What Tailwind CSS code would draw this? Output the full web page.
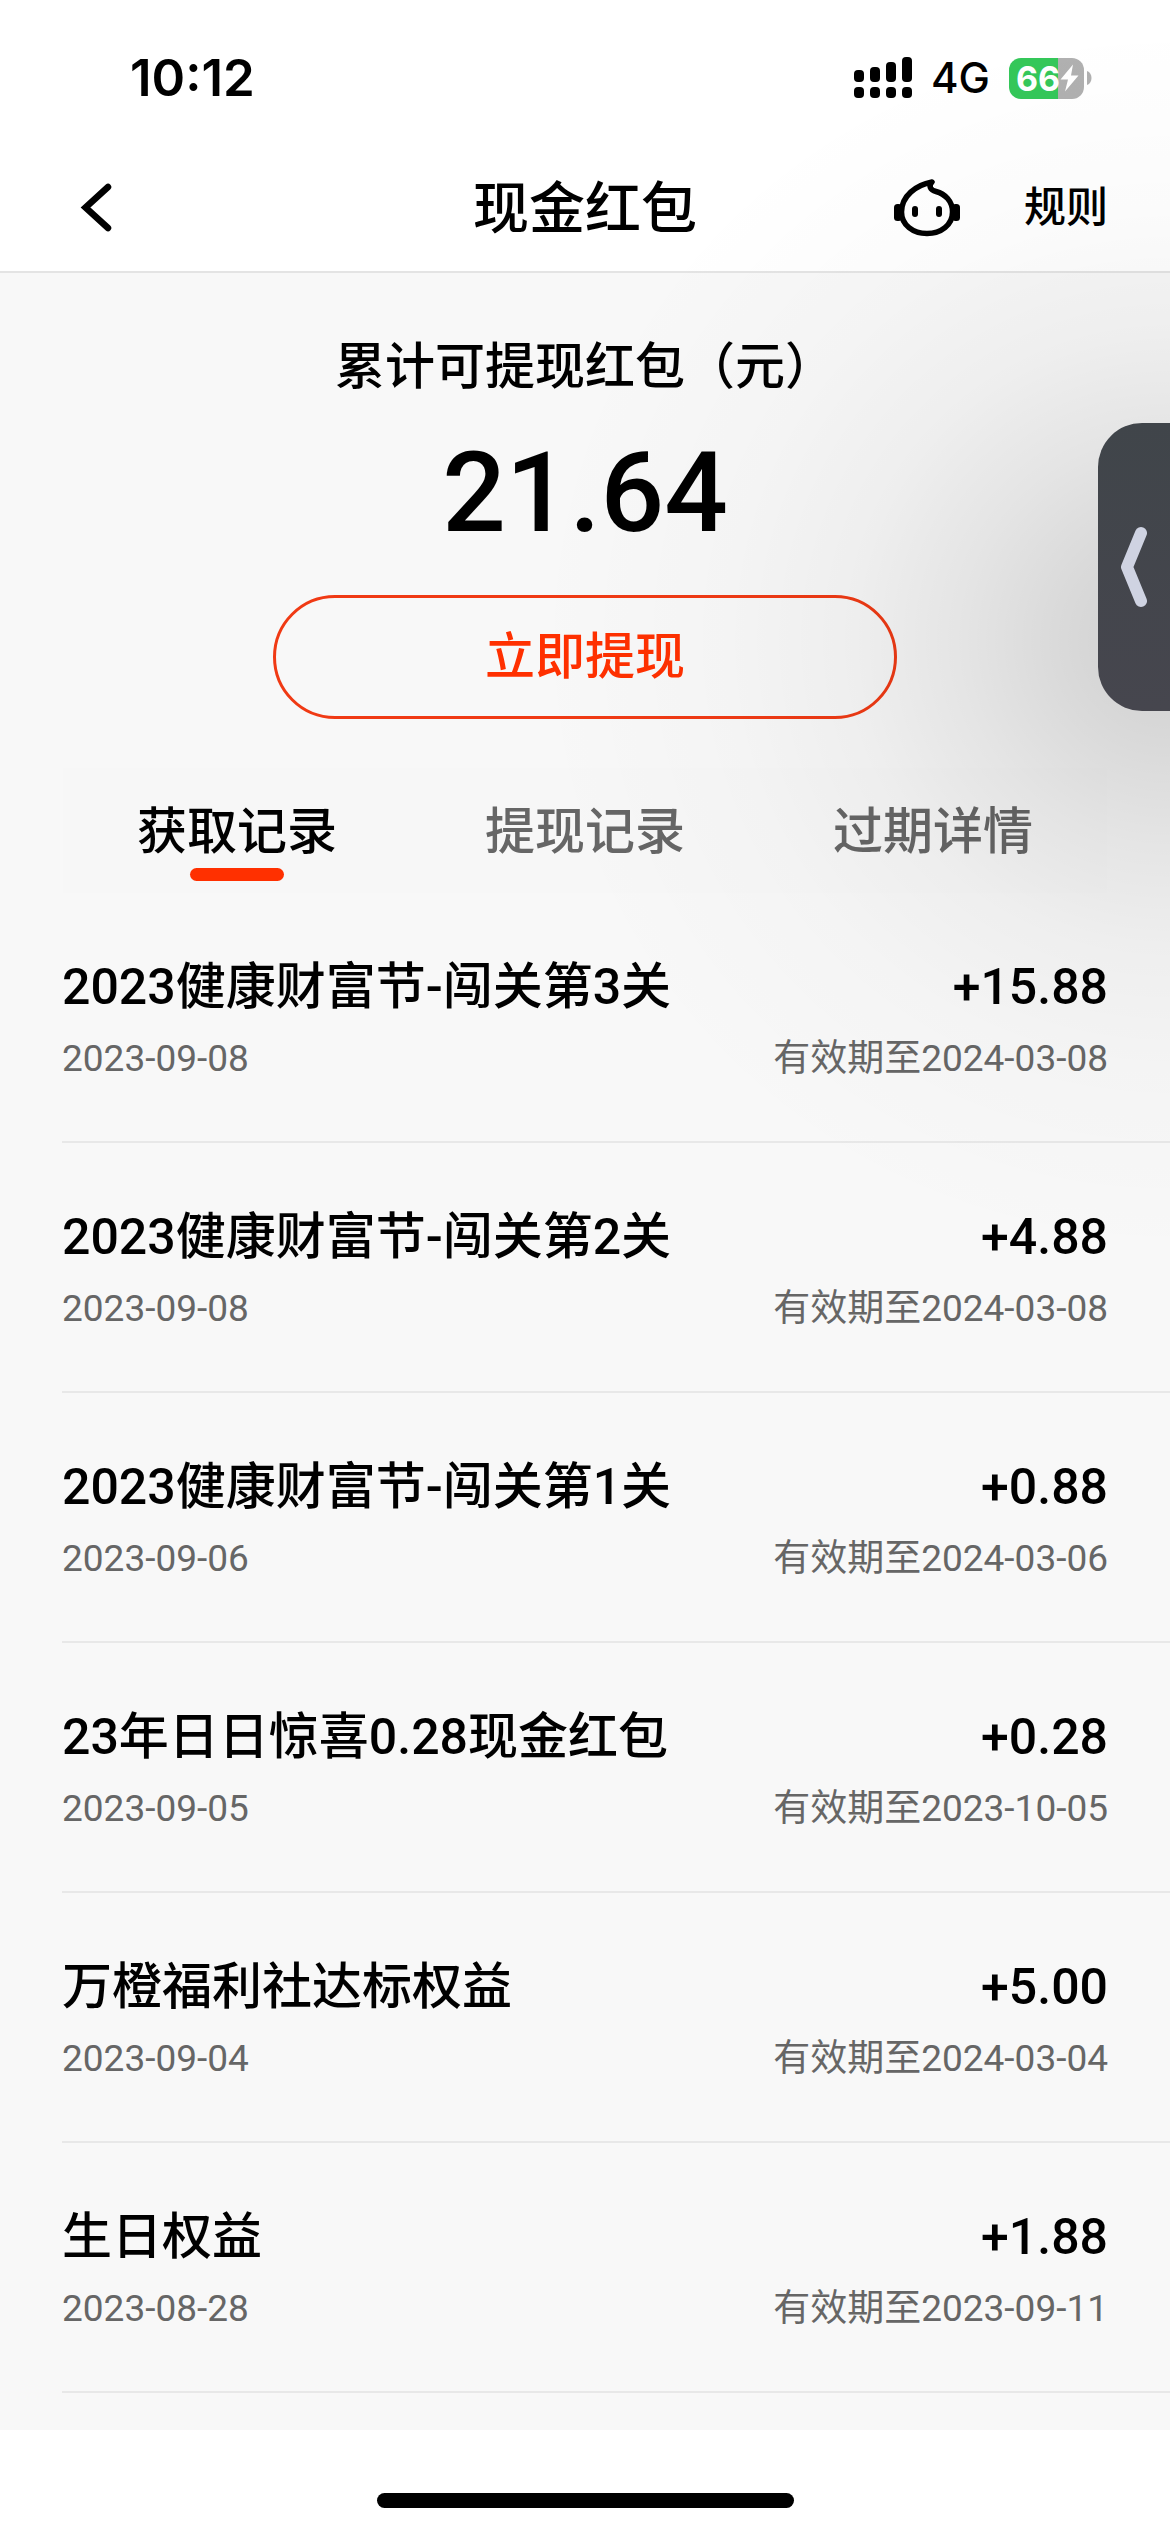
<!DOCTYPE html>
<html lang="zh-CN">
<head>
    <meta charset="UTF-8">
    <meta name="viewport" content="width=device-width, initial-scale=1.0">
    <title>现金红包</title>
    <script src="https://cdn.jsdelivr.net/npm/@tailwindcss/browser@4"></script>
    <style>
        body {
            font-family: Roboto, 'Noto Sans CJK SC', sans-serif;
        }
        /* soft shade spreading out from the side drawer handle */
        .shade {
            background: radial-gradient(ellipse 640px 620px at 100% 50%, rgba(0,0,0,.17) 0%, rgba(0,0,0,.12) 18%, rgba(0,0,0,.08) 33%, rgba(0,0,0,.04) 50%, rgba(0,0,0,.015) 70%, rgba(0,0,0,0) 100%);
        }
    </style>
</head>
<body class="relative min-h-screen flex flex-col overflow-x-hidden bg-[#f8f8f8] text-black">

    <!-- Status bar -->
    <div class="h-[144px] pl-[130px] pr-[78px] pt-3 flex items-center justify-between bg-white">
        <span class="font-[Inter] text-[51px] leading-[60px] font-semibold">10:12</span>
        <div class="flex items-center gap-[19px]">
            <svg class="w-[58px] h-[42px]" viewBox="0 0 58 42">
                <rect x="0" y="13" width="10" height="12" rx="4"/>
                <rect x="16" y="10" width="10" height="15" rx="4"/>
                <rect x="32" y="5" width="10" height="20" rx="4"/>
                <rect x="48" y="0" width="10" height="25" rx="4"/>
                <rect x="0" y="30" width="10" height="11" rx="4"/>
                <rect x="16" y="30" width="10" height="11" rx="4"/>
                <rect x="32" y="30" width="10" height="11" rx="4"/>
                <rect x="48" y="30" width="10" height="11" rx="4"/>
            </svg>
            <span class="font-[Inter] text-[42px] leading-[60px] font-medium">4G</span>
            <div class="flex items-center gap-[3px]">
                <div class="w-[75px] h-[41px] pl-[7px] rounded-[12px] flex items-center bg-linear-to-r from-[#34c759] from-66% to-[#b0b0b0] to-66% text-white">
                    <span class="font-[Inter] text-[34px] leading-[41px] font-bold">66</span>
                    <svg class="w-[19px] h-[28px] shrink-0" viewBox="0 0 19 28"><path d="M13 0.500L0.500 15.500H8L5 27.500L18.500 11.500H11Z" fill="#fff"/></svg>
                </div>
                <svg class="w-[5px] h-[14px]" viewBox="0 0 5 14"><path d="M0 0C6 2 6 12 0 14Z" fill="#b0b0b0"/></svg>
            </div>
        </div>
    </div>

    <!-- Nav bar -->
    <header class="h-[129px] px-[62px] grid grid-cols-[1fr_auto_1fr] items-center border-b-2 border-[#e4e4e4] bg-white">
        <button class="w-[60px] h-[60px] pl-4 flex items-center" aria-label="返回">
            <svg class="w-[34px] h-[50px]" viewBox="0 0 34 50" fill="none" stroke="#000" stroke-width="6.500" stroke-linecap="round"><path d="M30 4L7.500 24.500L30 45" stroke-linejoin="miter"/></svg>
        </button>
        <h1 class="pt-[3px] text-[56px] leading-[64px] font-medium">现金红包</h1>
        <div class="flex items-center justify-end gap-[64px]">
            <button aria-label="客服">
                <svg class="w-[66px] h-[58px]" viewBox="0 0 66 58" fill="none" stroke="#000" stroke-width="5.500">
                    <path d="M38 3C22 6 7.500 17 7.500 33C7.500 46 19 54.500 33 54.500C47 54.500 58.500 46 58.500 33C58.500 22 51 15 42 12.500C36 11 34.500 7 38 3Z" stroke-linejoin="round"/>
                    <rect x="0" y="25" width="8" height="17" rx="3.500" fill="#000" stroke="none"/>
                    <rect x="58" y="25" width="8" height="17" rx="3.500" fill="#000" stroke="none"/>
                    <rect x="18" y="27" width="6" height="11" rx="3" fill="#000" stroke="none"/>
                    <rect x="42" y="27" width="6" height="11" rx="3" fill="#000" stroke="none"/>
                </svg>
            </button>
            <a href="#" class="text-[42px] leading-[60px] font-medium">规则</a>
        </div>
    </header>

    <main class="flex-1">
        <!-- Balance -->
        <section class="pt-[64px] flex flex-col items-center">
            <p class="text-[50px] leading-[60px] font-medium">累计可提现红包（元）</p>
            <p class="mt-[36px] text-[112px] leading-[120px] font-medium">21.64</p>
            <button class="mt-[42px] w-[624px] h-[124px] rounded-full border-3 border-[#f03a14] text-[50px] leading-[64px] font-medium text-[#ff3000]">立即提现</button>
        </section>

        <!-- Tabs -->
        <nav class="mt-[49px] mx-[63px] h-[125px] grid grid-cols-3 bg-[#f7f7f7] text-[50px] leading-[60px] font-medium text-[#666]">
            <button class="tab pt-[34px] flex flex-col items-center text-black">获取记录<span class="bar mt-[6px] w-[94px] h-[13px] rounded-full bg-[#ff3000]"></span></button>
            <button class="tab pt-[34px] flex flex-col items-center">提现记录</button>
            <button class="tab pt-[34px] flex flex-col items-center">过期详情</button>
        </nav>

        <!-- Records -->
        <ul id="records" class="pl-[62px] pb-[36px]"></ul>
    </main>

    <footer class="h-[102px] pb-6 flex items-end justify-center bg-white">
        <div class="w-[417px] h-[15px] rounded-full bg-black"></div>
    </footer>

    <!-- Side drawer handle -->
    <div class="shade absolute right-0 top-0 w-[640px] h-[1280px] pointer-events-none"></div>
    <button class="absolute right-0 top-[423px] w-[72px] h-[288px] pl-[22px] flex items-center rounded-l-[44px] bg-linear-to-b from-[#40454a] to-[#46464e]" aria-label="展开">
        <svg class="w-[28px] h-[82px]" viewBox="0 0 28 82" fill="none" stroke="#cfd3e2" stroke-width="12" stroke-linecap="round" stroke-linejoin="round"><path d="M21 7L7 41L21 75"/></svg>
    </button>

    <script>
        const records = [
            { title: '2023健康财富节-闯关第3关', date: '2023-09-08', amount: '+15.88', expires: '2024-03-08' },
            { title: '2023健康财富节-闯关第2关', date: '2023-09-08', amount: '+4.88', expires: '2024-03-08' },
            { title: '2023健康财富节-闯关第1关', date: '2023-09-06', amount: '+0.88', expires: '2024-03-06' },
            { title: '23年日日惊喜0.28现金红包', date: '2023-09-05', amount: '+0.28', expires: '2023-10-05' },
            { title: '万橙福利社达标权益', date: '2023-09-04', amount: '+5.00', expires: '2024-03-04' },
            { title: '生日权益', date: '2023-08-28', amount: '+1.88', expires: '2023-09-11' }
        ];

        document.getElementById('records').innerHTML = records.map(r => `
            <li class="h-[250px] pt-[62px] pr-[62px] border-b-2 border-[#e8e8e8]">
                <div class="flex items-center justify-between text-[50px] leading-[64px] font-medium">
                    <span>${r.title}</span>
                    <span>${r.amount}</span>
                </div>
                <div class="mt-[14px] flex items-center justify-between text-[37px] leading-[52px] text-[#666]">
                    <span>${r.date}</span>
                    <span>有效期至${r.expires}</span>
                </div>
            </li>
        `).join('');
    </script>
</body>
</html>
